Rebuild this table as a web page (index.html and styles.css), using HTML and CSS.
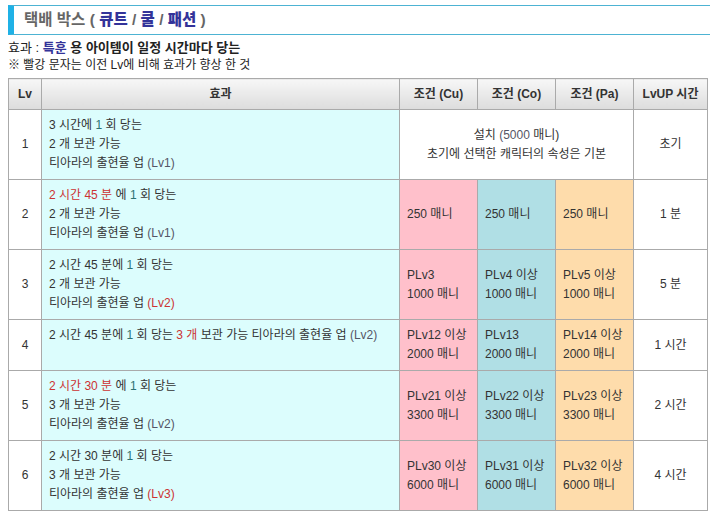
FILE: index.html
```html
<!DOCTYPE html>
<html lang="ko">
<head>
    <meta charset="UTF-8">
    <title>택배 박스</title>
    <link rel="stylesheet" href="styles.css">
</head>
<body>

    <!-- 제목 -->
    <div class="title">택배 박스 ( <b class="blue">큐트</b> / <b class="blue">쿨</b> / <b class="blue">패션</b> )</div>

    <p class="lead">효과 : <b class="blue">특훈</b> <b>용 아이템이 일정 시간마다 당는</b></p>
    <p class="note">※ 빨강 문자는 이전 Lv에 비해 효과가 향상 한 것</p>

    <table class="box-table">
        <colgroup>
            <col class="c-lv">
            <col class="c-eff">
            <col class="c-cond">
            <col class="c-cond">
            <col class="c-cond">
            <col class="c-time">
        </colgroup>
        <tr>
            <th>Lv</th>
            <th>효과</th>
            <th>조건 (Cu)</th>
            <th>조건 (Co)</th>
            <th>조건 (Pa)</th>
            <th>LvUP 시간</th>
        </tr>
        <tr>
            <td class="lv">1</td>
            <td class="eff">3 시간에 <span class="num">1</span> 회 당는<br>2 개 보관 가능<br>티아라의 출현율 업 <span class="lvl">(Lv1)</span></td>
            <td class="setup" colspan="3">설치 <span class="lvl">(5000</span> 매니)<br>초기에 선택한 캐릭터의 속성은 기본</td>
            <td class="time">초기</td>
        </tr>
        <tr>
            <td class="lv">2</td>
            <td class="eff"><span class="red">2 시간 45 분</span> 에 <span class="num">1</span> 회 당는<br>2 개 보관 가능<br>티아라의 출현율 업 <span class="lvl">(Lv1)</span></td>
            <td class="cu">250 매니</td>
            <td class="co">250 매니</td>
            <td class="pa">250 매니</td>
            <td class="time">1 분</td>
        </tr>
        <tr>
            <td class="lv">3</td>
            <td class="eff">2 시간 45 분에 <span class="num">1</span> 회 당는<br>2 개 보관 가능<br>티아라의 출현율 업 <span class="red">(Lv2)</span></td>
            <td class="cu">PLv3<br>1000 매니</td>
            <td class="co">PLv4 이상<br>1000 매니</td>
            <td class="pa">PLv5 이상<br>1000 매니</td>
            <td class="time">5 분</td>
        </tr>
        <tr>
            <td class="lv">4</td>
            <td class="eff top">2 시간 45 분에 <span class="num">1</span> 회 당는 <span class="red">3 개</span> 보관 가능 티아라의 출현율 업 <span class="lvl">(Lv2)</span></td>
            <td class="cu">PLv12 이상<br>2000 매니</td>
            <td class="co">PLv13<br>2000 매니</td>
            <td class="pa">PLv14 이상<br>2000 매니</td>
            <td class="time">1 시간</td>
        </tr>
        <tr>
            <td class="lv">5</td>
            <td class="eff"><span class="red">2 시간 30 분</span> 에 <span class="num">1</span> 회 당는<br>3 개 보관 가능<br>티아라의 출현율 업 <span class="lvl">(Lv2)</span></td>
            <td class="cu">PLv21 이상<br>3300 매니</td>
            <td class="co">PLv22 이상<br>3300 매니</td>
            <td class="pa">PLv23 이상<br>3300 매니</td>
            <td class="time">2 시간</td>
        </tr>
        <tr>
            <td class="lv">6</td>
            <td class="eff">2 시간 30 분에 <span class="num">1</span> 회 당는<br>3 개 보관 가능<br>티아라의 출현율 업 <span class="red">(Lv3)</span></td>
            <td class="cu">PLv30 이상<br>6000 매니</td>
            <td class="co">PLv31 이상<br>6000 매니</td>
            <td class="pa">PLv32 이상<br>6000 매니</td>
            <td class="time">4 시간</td>
        </tr>
    </table>

</body>
</html>
```

FILE: styles.css
```css
body {
    font-family: "Liberation Sans", "Noto Sans CJK KR", sans-serif;
    font-size: 12px;
    color: #333;
    margin: 5px 8px 8px;
    background-color: #fff;
}
.title {
    margin-right: -8px;
    height: 28px;
    line-height: 28px;
    border-top: 1px solid #4db3d3;
    border-bottom: 1px solid #4db3d3;
    border-left: 6px solid #1fb1e6;
    padding-left: 10px;
    font-size: 15.5px;
    font-weight: bold;
    color: #666;
}
.blue {
    color: #333399;
}
.lead,
.note {
    margin: 0;
    line-height: 17px;
    color: #222;
}
.lead {
    margin-top: 4px;
    font-size: 13px;
}
.note {
    margin-top: 1px;
    font-size: 12px;
}
.box-table {
    width: 699px;
    margin-top: 4px;
    border-collapse: collapse;
    table-layout: fixed;
}
.c-lv { width: 33px; }
.c-eff { width: 358px; }
.c-cond { width: 78px; }
.c-time { width: 74px; }
.box-table th,
.box-table td {
    border: 1px solid #aaa;
    line-height: 19px;
    padding: 6px 7px;
}
.box-table th {
    height: 20px;
    padding: 5px 2px;
    font-weight: bold;
    color: #333;
    background: linear-gradient(#f7f7f7, #dcdcdc);
}
.lv,
.time,
.setup {
    text-align: center;
    background-color: #fff;
}
.eff {
    background-color: #dcfdfd;
}
.eff.top {
    vertical-align: top;
}
.cu {
    background-color: #ffc0cb;
}
.co {
    background-color: #b0dfe5;
}
.pa {
    background-color: #fedcab;
}
.red {
    color: #cc3333;
}
.num {
    color: #2d7272;
}
.lvl {
    color: #555566;
}
```
